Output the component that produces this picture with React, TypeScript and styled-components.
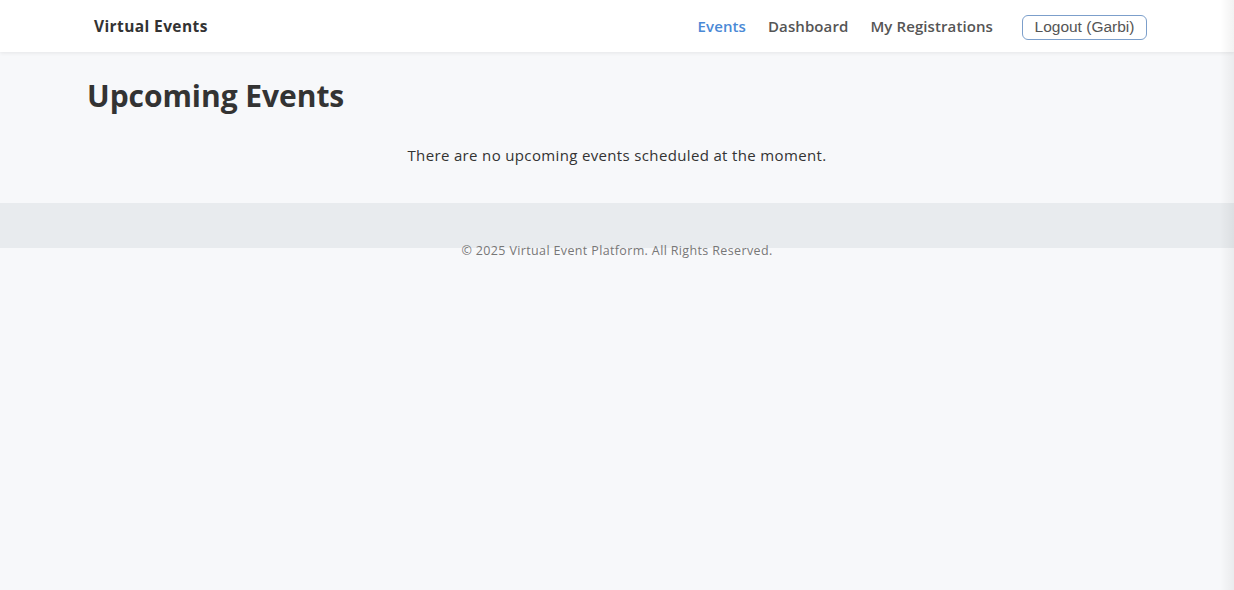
import React from "react";
import styled, { createGlobalStyle } from "styled-components";

const GlobalStyle = createGlobalStyle`
  html, body { margin: 0; padding: 0; }
  body {
    background: #f7f8fa;
    font-family: "Open Sans", "DejaVu Sans", sans-serif;
    color: #333;
    min-height: 590px;
  }
`;

const Page = styled.div`
  min-height: 590px;
  background: #f7f8fa;
  position: relative;
  overflow: hidden;
`;

const NavBar = styled.header`
  height: 52px;
  background: #ffffff;
  box-shadow: 0 1px 4px rgba(0, 0, 0, 0.08);
  position: relative;
  z-index: 1;
`;

const NavInner = styled.div`
  width: 1060px;
  margin: 0 auto;
  height: 100%;
  display: flex;
  align-items: center;
  justify-content: space-between;
`;

const Brand = styled.div`
  padding-left: 7px;
  font-size: 15.5px;
  font-weight: 700;
  color: #333;
  letter-spacing: 0.4px;
`;

const NavLinks = styled.nav`
  display: flex;
  align-items: center;
  gap: 22px;
`;

const NavLink = styled.a<{ $active?: boolean }>`
  font-size: 15px;
  font-weight: 600;
  color: ${(p) => (p.$active ? "#4a89d6" : "#555")};
  text-decoration: none;
  letter-spacing: 0.1px;
`;

const LogoutButton = styled.button`
  margin-left: 7px;
  margin-top: 2px;
  width: 125px;
  height: 25px;
  border: 1px solid #7c9fcb;
  border-radius: 6px;
  background: #fff;
  color: #555;
  font-family: "Liberation Sans", Arial, sans-serif;
  font-size: 15.5px;
  padding: 0;
`;

const Main = styled.main`
  width: 1060px;
  margin: 0 auto;
  padding-top: 26px;
  height: 151px;
  box-sizing: border-box;
`;

const Title = styled.h1`
  margin: 0;
  font-size: 30px;
  font-weight: 700;
  color: #333;
  line-height: 36px;
  letter-spacing: -0.05px;
`;

const EmptyText = styled.p`
  margin: 31px 0 0;
  text-align: center;
  font-size: 15px;
  color: #333;
  line-height: 20px;
  letter-spacing: 0.35px;
`;

const Footer = styled.footer`
  height: 45px;
  background: #e8ebee;
  padding-top: 40px;
  box-sizing: border-box;
`;

const FooterText = styled.p`
  margin: 0;
  text-align: center;
  font-size: 12.5px;
  color: #777;
  line-height: 16px;
  letter-spacing: 0.36px;
`;

const EdgeShade = styled.div`
  position: absolute;
  top: 0;
  right: 0;
  bottom: 0;
  width: 14px;
  background: linear-gradient(to right, rgba(0, 0, 0, 0), rgba(0, 0, 0, 0.05));
  pointer-events: none;
  z-index: 2;
`;

export default function App() {
  return (
    <>
      <GlobalStyle />
      <Page>
        <NavBar>
          <NavInner>
            <Brand>Virtual Events</Brand>
            <NavLinks>
              <NavLink $active>Events</NavLink>
              <NavLink>Dashboard</NavLink>
              <NavLink>My Registrations</NavLink>
              <LogoutButton>Logout (Garbi)</LogoutButton>
            </NavLinks>
          </NavInner>
        </NavBar>
        <Main>
          <Title>Upcoming Events</Title>
          <EmptyText>There are no upcoming events scheduled at the moment.</EmptyText>
        </Main>
        <Footer>
          <FooterText>© 2025 Virtual Event Platform. All Rights Reserved.</FooterText>
        </Footer>
        <EdgeShade />
      </Page>
    </>
  );
}
